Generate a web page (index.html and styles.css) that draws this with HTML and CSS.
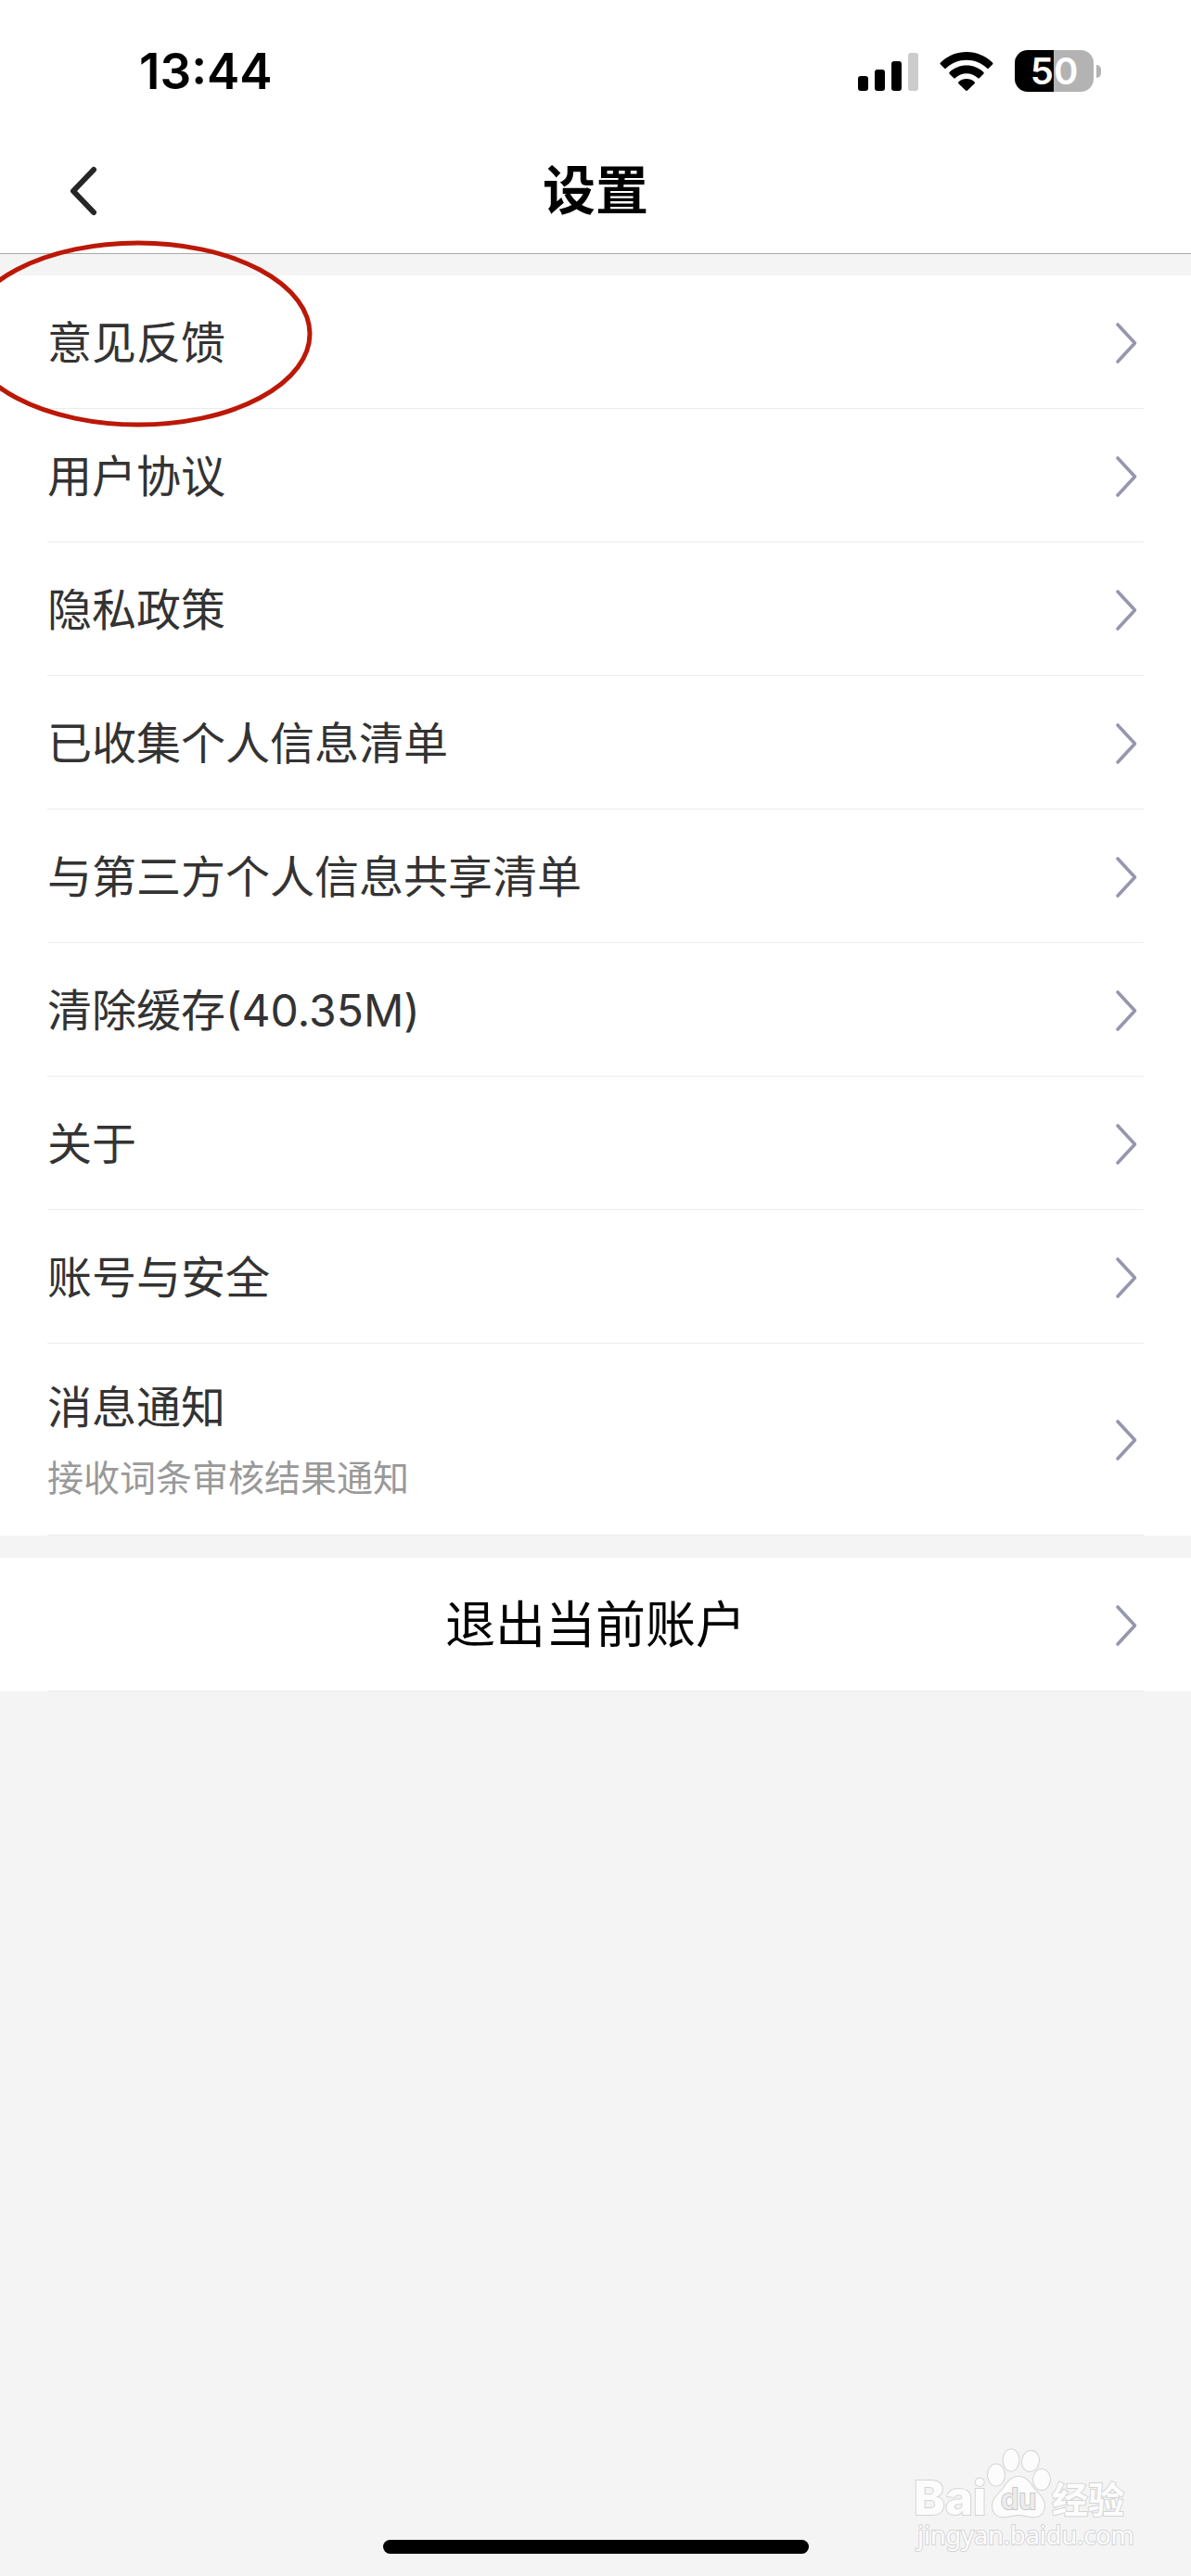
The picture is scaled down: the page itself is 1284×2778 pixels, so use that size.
FILE: index.html
```html
<!DOCTYPE html>
<html lang="zh-CN">
<head>
  <meta charset="UTF-8">
  <meta name="viewport" content="width=device-width, initial-scale=1">
  <title>设置</title>
  <link rel="stylesheet" href="styles.css">
</head>
<body>
  <svg width="0" height="0" class="sprite" aria-hidden="true">
    <symbol id="chevron" viewBox="0 0 27 46">
      <path d="M4 3 L22.500 23 L4 43" fill="none" stroke="currentColor" stroke-width="3.600" stroke-linecap="round" stroke-linejoin="round"/>
    </symbol>
  </svg>

  <div class="status-bar">
    <div class="time">13:44</div>
    <div class="status-icons">
      <svg class="signal" viewBox="0 0 65 42">
        <rect x="0" y="26" width="11" height="16" rx="3"/>
        <rect x="18" y="19" width="11" height="23" rx="3"/>
        <rect x="36" y="10" width="11" height="32" rx="3"/>
        <rect x="54" y="1" width="11" height="41" rx="3" fill="#ccc"/>
      </svg>
      <svg class="wifi" viewBox="0 0 58 42">
        <path d="M29 0 C40 0 50 4.500 57 11.500 Q58 12.500 57 13.500 L53 17.500 Q52 18.500 51 17.500 C45 12 37.500 8.800 29 8.800 C20.500 8.800 13 12 7 17.500 Q6 18.500 5 17.500 L1 13.500 Q0 12.500 1 11.500 C8 4.500 18 0 29 0 Z"/>
        <path d="M29 14.500 C36 14.500 42.500 17.200 47.300 21.700 Q48.300 22.700 47.300 23.700 L43 28 Q42 29 41 28 C37.700 25 33.500 23.300 29 23.300 C24.500 23.300 20.300 25 17 28 Q16 29 15 28 L10.700 23.700 Q9.700 22.700 10.700 21.700 C15.500 17.200 22 14.500 29 14.500 Z"/>
        <path d="M29 29 C32.300 29 35.200 30.200 37.500 32.200 Q38.500 33.200 37.500 34.200 L30 41.500 Q29 42.300 28 41.500 L20.500 34.200 Q19.500 33.200 20.500 32.200 C22.800 30.200 25.700 29 29 29 Z"/>
      </svg>
      <div class="battery">
        <div class="battery-body">50</div>
        <div class="battery-cap"></div>
      </div>
    </div>
  </div>

  <header class="nav">
    <button class="back" type="button" aria-label="返回">
      <svg viewBox="0 0 32 54">
        <path d="M27 4 L5 27 L27 50" fill="none" stroke="currentColor" stroke-width="6" stroke-linecap="round" stroke-linejoin="round"/>
      </svg>
    </button>
    <h1>设置</h1>
  </header>

  <main>
    <ul class="group">
      <li>
        <a class="row" href="#"><span>意见反馈</span><svg class="arrow"><use href="#chevron"/></svg></a>
        <svg class="mark" viewBox="0 0 376 202">
          <ellipse cx="188" cy="101" rx="185" ry="98" fill="none" stroke="#bb1807" stroke-width="5"/>
        </svg>
      </li>
      <li><a class="row" href="#"><span>用户协议</span><svg class="arrow"><use href="#chevron"/></svg></a></li>
      <li><a class="row" href="#"><span>隐私政策</span><svg class="arrow"><use href="#chevron"/></svg></a></li>
      <li><a class="row" href="#"><span>已收集个人信息清单</span><svg class="arrow"><use href="#chevron"/></svg></a></li>
      <li><a class="row" href="#"><span>与第三方个人信息共享清单</span><svg class="arrow"><use href="#chevron"/></svg></a></li>
      <li><a class="row" href="#"><span>清除缓存(40.35M)</span><svg class="arrow"><use href="#chevron"/></svg></a></li>
      <li><a class="row" href="#"><span>关于</span><svg class="arrow"><use href="#chevron"/></svg></a></li>
      <li><a class="row" href="#"><span>账号与安全</span><svg class="arrow"><use href="#chevron"/></svg></a></li>
      <li>
        <a class="row row-tall" href="#">
          <span class="labels">
            <span>消息通知</span>
            <span class="hint">接收词条审核结果通知</span>
          </span>
          <svg class="arrow"><use href="#chevron"/></svg>
        </a>
      </li>
    </ul>

    <div class="group">
      <button class="row logout" type="button"><span>退出当前账户</span><svg class="arrow"><use href="#chevron"/></svg></button>
    </div>
  </main>

  <footer class="footer">
    <div class="home-indicator"></div>
    <svg class="watermark" viewBox="0 0 250 120">
      <ellipse cx="88" cy="31" rx="9" ry="11.500"/>
      <ellipse cx="104" cy="15" rx="8.500" ry="11.500"/>
      <ellipse cx="125" cy="16" rx="9" ry="11" transform="rotate(10 125 16)"/>
      <ellipse cx="137" cy="36" rx="9" ry="11"/>
      <path d="M112 33 C120 33 124 39 128 45 C133 52 140 55 140 64 C140 73 134 77 126 76 C119 75 116 74 112 74 C108 74 105 75 98 76 C90 77 84 73 84 64 C84 56 91 52 96 45 C100 39 104 33 112 33 Z"/>
      <text x="-1" y="74" class="wm-bai">Bai</text>
      <text x="93" y="68" class="wm-du">du</text>
      <text x="148" y="72" class="wm-cn">经验</text>
      <text x="3" y="106" class="wm-url">jingyan.baidu.com</text>
    </svg>
  </footer>
</body>
</html>
```
FILE: styles.css
```css
* {
  box-sizing: border-box;
}

body {
  margin: 0;
  min-height: 100vh;
  display: flex;
  flex-direction: column;
  position: relative;
  background: #f4f4f4;
  color: #333;
  font-family: Inter, "Noto Sans CJK SC", sans-serif;
  font-size: 48px;
  line-height: 72px;
}

.sprite {
  position: absolute;
}

/* Status bar */
.status-bar {
  display: flex;
  align-items: center;
  justify-content: space-between;
  height: 135px;
  padding: 18px 97px 0 150px;
  background: #fff;
  color: #000;
}

.time {
  font-size: 53px;
  font-weight: 600;
}

.status-icons {
  display: flex;
  align-items: center;
  gap: 23px;
}

.signal {
  width: 65px;
  height: 42px;
}

.wifi {
  width: 58px;
  height: 42px;
}

.battery {
  display: flex;
  align-items: center;
  gap: 3px;
}

.battery-body {
  width: 85px;
  height: 45px;
  border-radius: 14px;
  background: linear-gradient(to right, #000 50%, #b3b3b3 50%);
  color: #fff;
  font-size: 40px;
  font-weight: 600;
  line-height: 45px;
  text-align: center;
}

.battery-cap {
  width: 5px;
  height: 14px;
  border-radius: 0 7px 7px 0;
  background: #b3b3b3;
}

/* Title bar */
.nav {
  display: grid;
  grid-template-columns: 1fr auto 1fr;
  align-items: center;
  height: 139px;
  padding: 4px 51px 0;
  border-bottom: 1px solid #a9abab;
  background: #fff;
}

.nav h1 {
  margin: 0;
  color: #000;
  font-size: 57px;
  font-weight: 600;
}

.back {
  justify-self: start;
  padding: 0 23px;
  border: none;
  background: none;
  color: #262626;
  cursor: pointer;
}

.back svg {
  display: block;
  width: 32px;
  height: 54px;
}

/* Rows */
.group {
  margin: 24px 0 0;
  padding: 0 51px;
  background: #fff;
  list-style: none;
}

.nav + main .group:first-child {
  margin-top: 23px;
}

.group li {
  position: relative;
}

.row {
  display: flex;
  align-items: center;
  justify-content: space-between;
  width: 100%;
  height: 144px;
  padding: 2px 5px 0 0;
  border: none;
  border-bottom: 1px solid #ececec;
  background: none;
  color: #333;
  font: inherit;
  text-decoration: none;
  cursor: pointer;
}

.row-tall {
  height: 207px;
}

.labels {
  display: flex;
  flex-direction: column;
  gap: 4px;
  padding-top: 6px;
}

.hint {
  color: #999;
  font-size: 39px;
}

.arrow {
  width: 27px;
  height: 46px;
  color: #9696ae;
}

.logout {
  color: #000;
  font-size: 54px;
}

.logout span {
  flex: 1;
  padding-left: 32px;
  text-align: center;
}

.mark {
  position: absolute;
  top: -38px;
  left: -90px;
  width: 376px;
  height: 202px;
  pointer-events: none;
}

/* Bottom */
.footer {
  margin-top: auto;
  padding-bottom: 24px;
}

.home-indicator {
  width: 459px;
  height: 15px;
  margin: 0 auto;
  border-radius: 8px;
  background: #000;
}

.watermark {
  position: absolute;
  right: 48px;
  bottom: 20px;
  width: 250px;
  height: 120px;
  fill: #fcfcfc;
  stroke: #d4d4d4;
  stroke-width: 2px;
  paint-order: stroke;
}

.wm-bai {
  font-size: 51px;
  font-weight: 800;
}

.wm-du {
  font-size: 31px;
  font-weight: 600;
  fill: #ececec;
  stroke: #c8c8c8;
}

.wm-cn {
  font-size: 39px;
  font-weight: 700;
}

.wm-url {
  font-family: "Noto Sans", sans-serif;
  font-size: 27px;
}
```
